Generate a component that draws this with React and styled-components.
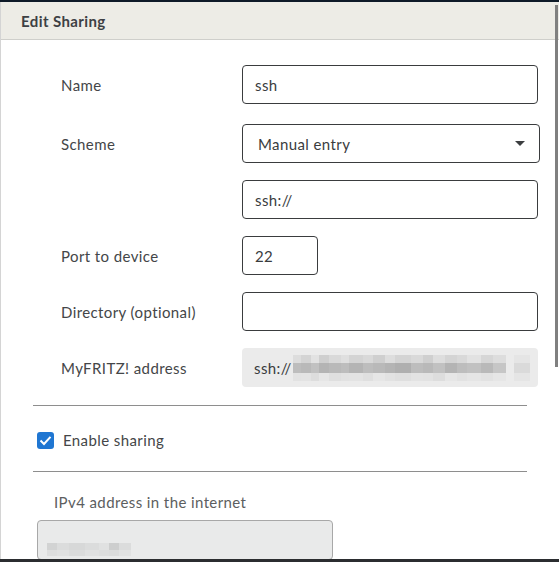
import React from "react";
import styled, { createGlobalStyle } from "styled-components";

const Global = createGlobalStyle`
  html, body { margin: 0; padding: 0; background: #fff; }
  body { font-family: Lato, "Open Sans", sans-serif; letter-spacing: 0.4px; }
`;

const Frame = styled.div`
  position: relative;
  width: 559px;
  height: 562px;
  display: flex;
  flex-direction: column;
  overflow: hidden;
  background: #fff;
`;

const TopBar = styled.div`
  height: 2px;
  background: #0e1a28;
  flex: none;
`;

const BottomBar = styled.div`
  height: 3px;
  background: #2b2d30;
  flex: none;
`;

const Dialog = styled.div`
  flex: 1;
  display: flex;
  flex-direction: column;
  border-left: 1px solid #d4d4d4;
  overflow: hidden;
`;

const Header = styled.div`
  height: 37px;
  flex: none;
  background: #edece6;
  border-bottom: 1px solid #cfcfcb;
  display: flex;
  align-items: center;
  padding-left: 20px;
  font-size: 15px;
  font-weight: 700;
  color: #3d4044;
`;

const Body = styled.div`
  padding: 25px 0 0 32px;
  display: flex;
  flex-direction: column;
`;

const Form = styled.div`
  display: grid;
  grid-template-columns: 181px 298px;
  padding-left: 28px;
  row-gap: 17px;
`;

const Label = styled.div`
  display: flex;
  align-items: center;
  height: 39px;
  font-size: 15px;
  color: #444648;
  margin-top: ${(p) => p.$mt || "0"};
`;

const Field = styled.div`
  box-sizing: border-box;
  height: 39px;
  width: ${(p) => p.$w || "296px"};
  border: ${(p) => (p.$readonly ? "none" : "1px solid #3a3c3e")};
  background: ${(p) => (p.$readonly ? "#ebebeb" : "#fff")};
  border-radius: 4px;
  display: flex;
  align-items: center;
  padding-left: ${(p) => p.$pad || "12px"};
  padding-right: 14px;
  font-size: 15px;
  color: #3a3c3e;
  margin-top: ${(p) => p.$mt || "0"};
`;

const SelectText = styled.span`
  flex: 1;
`;

const Caret = styled.span`
  width: 0;
  height: 0;
  border-left: 5px solid transparent;
  border-right: 5px solid transparent;
  border-top: 5px solid #3c3e40;
`;

const Blur = styled.span`
  display: flex;
  flex-direction: column;
  justify-content: center;
  margin-left: 1px;
`;

const BlurRow = styled.span`
  display: flex;
`;

const Px = styled.span`
  display: block;
  width: ${(p) => p.$w}px;
  height: ${(p) => p.$h || 10}px;
  background: #8f8f8f;
`;

const Divider = styled.hr`
  border: none;
  border-top: 1px solid #8e8e8e;
  margin: ${(p) => p.$m};
  width: 494px;
`;

const CheckRow = styled.label`
  display: flex;
  align-items: center;
  gap: 9px;
  padding-left: 4px;
  height: 18px;
  font-size: 15px;
  color: #444648;
`;

const Box = styled.span`
  width: 17px;
  height: 17px;
  border-radius: 3px;
  background: #1f76d2;
  display: flex;
  align-items: center;
  justify-content: center;
`;

const SubLabel = styled.div`
  padding-left: 21px;
  font-size: 15px;
  color: #5c5e60;
  height: 20px;
  display: flex;
  align-items: center;
`;

const IpBox = styled.div`
  box-sizing: border-box;
  margin: 8px 0 0 4px;
  width: 296px;
  height: 40px;
  border: 1px solid #a8a8a8;
  border-radius: 4px;
  background: #e9eaea;
  display: flex;
  align-items: flex-end;
  padding: 0 0 3px 8px;
`;

const Scrollbar = styled.div`
  position: absolute;
  right: 1px;
  top: 5px;
  width: 3px;
  height: 362px;
  background: #808080;
`;

const topRow = [
  [8, 0.15], [10, 0.25], [8, 0.1], [10, 0.3], [12, 0.2], [8, 0.12], [14, 0.25],
  [10, 0.2], [12, 0.3], [10, 0.15], [16, 0.25], [12, 0.2], [10, 0.3], [12, 0.15],
  [12, 0.25], [10, 0.2], [14, 0.1], [12, 0.22], [13, 0.15],
];
const midRow = [
  [8, 0.5], [10, 0.55], [8, 0.45], [10, 0.6], [12, 0.55], [8, 0.5], [14, 0.6],
  [10, 0.5], [12, 0.55], [10, 0.6], [16, 0.65], [12, 0.5], [10, 0.55], [12, 0.45],
  [12, 0.6], [10, 0.5], [14, 0.45], [12, 0.55], [13, 0.4],
];
const lowRow = [
  [8, 0.1], [10, 0.08], [8, 0.15], [10, 0.05], [12, 0.12], [8, 0.1], [14, 0.08],
  [10, 0.12], [12, 0.05], [10, 0.1], [16, 0.12], [12, 0.08], [10, 0.1], [12, 0.15],
  [12, 0.05], [10, 0.1], [14, 0.06], [12, 0.1], [13, 0.05],
];

export default function App() {
  return (
    <>
      <Global />
      <Frame>
        <TopBar />
        <Dialog>
          <Header>Edit Sharing</Header>
          <Body>
            <Form>
              <Label>Name</Label>
              <Field>ssh</Field>

              <Label $mt="3px">Scheme</Label>
              <Field $w="298px" $pad="15px" $mt="3px">
                <SelectText>Manual entry</SelectText>
                <Caret />
              </Field>

              <Label />
              <Field>ssh://</Field>

              <Label>Port to device</Label>
              <Field $w="76px">22</Field>

              <Label>Directory (optional)</Label>
              <Field />

              <Label>MyFRITZ! address</Label>
              <Field $readonly>
                ssh://
                <Blur>
                  {[[topRow, 8], [midRow, 10], [lowRow, 8]].map(([row, h], r) => (
                    <BlurRow key={r}>
                      {row.map(([w, o], i) => (
                        <Px key={i} $w={w} $h={h} style={{ opacity: o }} />
                      ))}
                      <Px $w={8} $h={h} style={{ opacity: 0 }} />
                      <Px $w={16} $h={h} style={{ opacity: r === 1 ? 0.18 : 0.06 }} />
                    </BlurRow>
                  ))}
                </Blur>
              </Field>
            </Form>

            <Divider $m="18px 0 25px 0" />
            <CheckRow>
              <Box>
                <svg width="13" height="11" viewBox="0 0 13 11">
                  <path d="M1.5 5.5 L5 9 L11.5 1.8" fill="none" stroke="#fff" strokeWidth="2" />
                </svg>
              </Box>
              Enable sharing
            </CheckRow>
            <Divider $m="22px 0 20px 0" />
            <SubLabel>IPv4 address in the internet</SubLabel>
            <IpBox>
              <Blur>
                <BlurRow>
                  {[[10, 0.25], [12, 0.15], [16, 0.2], [14, 0.15], [10, 0.1], [10, 0.3], [12, 0.15]].map(
                    ([w, o], i) => (
                      <Px key={i} $w={w} $h={7} style={{ opacity: o }} />
                    )
                  )}
                </BlurRow>
                <BlurRow>
                  {[[10, 0.12], [12, 0.1], [16, 0.15], [14, 0.1], [10, 0.12], [10, 0.15], [12, 0.08]].map(
                    ([w, o], i) => (
                      <Px key={i} $w={w} $h={6} style={{ opacity: o }} />
                    )
                  )}
                </BlurRow>
              </Blur>
            </IpBox>
          </Body>
        </Dialog>
        <BottomBar />
        <Scrollbar />
      </Frame>
    </>
  );
}
